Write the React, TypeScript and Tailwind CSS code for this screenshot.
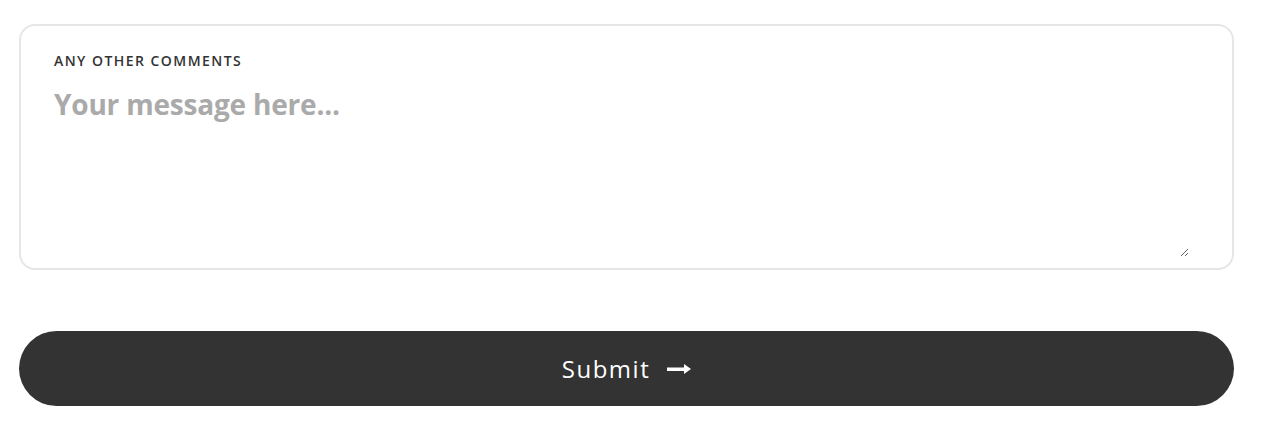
export default function App() {
  return (
    <div className="bg-white min-h-[432px] px-[19px] pt-[24px] font-['Open_Sans',sans-serif]">
      {/* comments box */}
      <div className="w-[1215px] rounded-[16px] border-2 border-[#e6e6e6] pl-[33px] pr-[43px] pt-[25px] pb-[11px]">
        <label className="block text-[14px] leading-[20px] font-semibold uppercase tracking-[1.45px] text-[#333]">
          Any other comments
        </label>
        <textarea
          placeholder="Your message here..."
          className="mt-[15px] block w-full h-[171px] resize-y text-[28px] leading-[36px] font-bold tracking-[-0.2px] text-[#333] placeholder:text-[#aaaaaa] outline-none"
        />
      </div>

      <button className="mt-[61px] w-[1215px] h-[75px] rounded-full bg-[#333333] text-white text-[24px] tracking-[1.5px] flex items-center justify-center gap-[17px]">
        <span>Submit</span>
        <svg width="24" height="10" viewBox="0 0 24 10" fill="none" aria-hidden="true">
          <rect x="0" y="3.5" width="19" height="3.5" fill="white" />
          <path d="M17 0 L24 5 L17 10 Z" fill="white" />
        </svg>
      </button>
    </div>
  );
}
